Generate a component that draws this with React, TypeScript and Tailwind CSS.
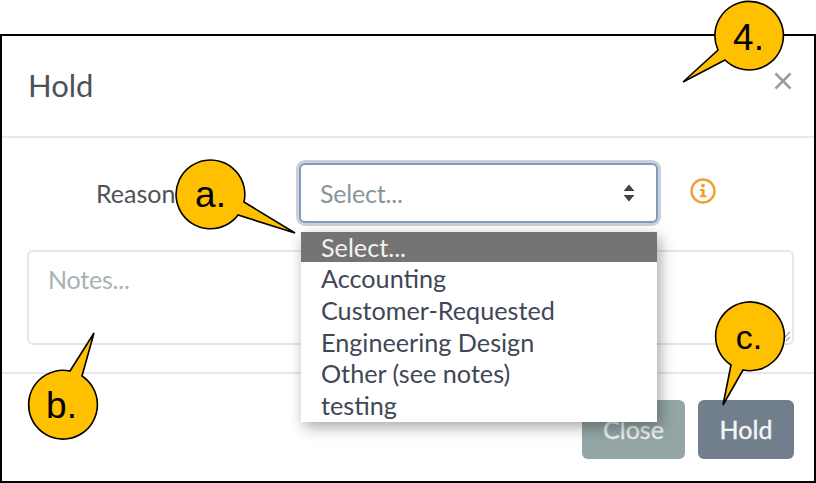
import React from "react";

function Callout({ path, label, textSize, tx, ty }: { path: string; label: string; textSize: number; tx: number; ty: number }) {
  return (
    <svg className="absolute left-0 top-0 z-30 pointer-events-none" width="816" height="483" viewBox="0 0 816 483">
      <path d={path} fill="#FFC000" stroke="#000" strokeWidth="1.6" strokeLinejoin="miter" />
      <text x={tx} y={ty} textAnchor="middle" fontFamily="'Liberation Sans', Arial, sans-serif" fontSize={textSize} fill="#000">{label}</text>
    </svg>
  );
}

const options = ["Accounting", "Customer-Requested", "Engineering Design", "Other (see notes)", "testing"];

export default function App() {
  return (
    <div className="relative w-[816px] h-[483px] overflow-hidden bg-white pt-[34px] font-['Lato','Open_Sans',sans-serif]">
      <div className="relative flex h-[449px] w-[816px] flex-col border-2 border-black bg-white">
        <header className="flex h-[102px] shrink-0 items-center justify-between border-b-2 border-[#e6e9ec] pl-[26px] pr-[21px]">
          <h1 className="text-[31px] font-normal leading-none text-[#4b5257] mt-[-1px]">Hold</h1>
          <svg width="20" height="20" viewBox="0 0 20 20" className="mt-[-10px]">
            <path d="M2.5 2.5 L17.5 17.5 M17.5 2.5 L2.5 17.5" stroke="#9a9c9d" strokeWidth="2.6" />
          </svg>
        </header>

        <main className="flex flex-1 flex-col px-[25px] pt-[25px]">
          <div className="flex h-[60px] items-center">
            <label className="w-[272px] pl-[69px] text-[25px] leading-none text-[#4d5358]">Reason</label>
            <div className="flex h-[60px] w-[359px] items-center justify-between rounded-[6px] border-2 border-[#7f9dbd] bg-white pl-[19px] pr-[21px] shadow-[0_0_0_3px_#c9d2da]">
              <span className="text-[25px] leading-none tracking-[-0.2px] text-[#87969a]">Select...</span>
              <svg width="12" height="18" viewBox="0 0 12 18">
                <path d="M6 0.5 L11.5 7 H0.5 Z M0.5 11 H11.5 L6 17.5 Z" fill="#3f474e" />
              </svg>
            </div>
            <svg width="28" height="28" viewBox="0 0 28 28" className="ml-[31px] mt-[-4px]">
              <circle cx="14" cy="14" r="11.5" fill="none" stroke="#f0a032" strokeWidth="2.4" />
              <circle cx="14" cy="8.6" r="1.9" fill="#f0a032" />
              <path d="M10.8 12 H15.6 V18.3 H17.4 V20.2 H10.8 V18.3 H12.6 V13.9 H10.8 Z" fill="#f0a032" />
            </svg>
          </div>

          <div className="relative mt-[27px] h-[95px] w-[767px] rounded-[6px] border-2 border-[#e3e7eb] bg-white pl-[19px] pt-[15px]">
            <span className="block text-[25px] leading-none tracking-[-0.2px] text-[#a6b3b3]">Notes...</span>
            <svg width="12" height="12" viewBox="0 0 12 12" className="absolute bottom-[1px] right-[1px]">
              <path d="M11 2 L2 11 M11 7 L7 11" stroke="#a0a4a6" strokeWidth="1.1" />
            </svg>
          </div>
        </main>

        <footer className="flex h-[109px] shrink-0 items-start justify-end gap-[13px] border-t-2 border-[#e6e9ec] pr-[20px] pt-[26px]">
          <button className="h-[59px] w-[103px] rounded-[6px] bg-[#93a5a5] text-[25px] font-normal text-[#e9eeee] [-webkit-text-stroke:0.4px_#e9eeee]">Close</button>
          <button className="h-[59px] w-[96px] rounded-[6px] bg-[#717e8b] text-[25px] font-normal text-[#f4f5f6] [-webkit-text-stroke:0.4px_#f4f5f6]">Hold</button>
        </footer>
      </div>

      <ul className="absolute left-[301px] top-[232px] z-20 h-[190px] w-[356px] bg-white shadow-[3px_5px_14px_rgba(0,0,0,0.35)] text-[25.2px] leading-[32px] text-[#3f4756]">
        <li className="h-[30px] bg-[#747474] pl-[20px] leading-[31px] text-[#f2f2f2]">Select...</li>
        {options.map((o) => (
          <li key={o} className="h-[31.8px] pl-[20px]">{o}</li>
        ))}
      </ul>

      <Callout label="a." textSize={37} tx={210.5} ty={207}
        path="M295 233 L238 215 A34.4 34.4 0 1 1 244 202 Z" />
      <Callout label="4." textSize={37} tx={748.5} ty={50}
        path="M683 82 L718 50 A34.3 34.3 0 1 1 725 60 Z" />
      <Callout label="b." textSize={37} tx={61.5} ty={418}
        path="M94 333 L82 376 A34.4 34.4 0 1 1 70 371 Z" />
      <Callout label="c." textSize={34} tx={749} ty={349}
        path="M723 405 L731 365 A34.4 34.4 0 1 1 743 370 Z" />
    </div>
  );
}
